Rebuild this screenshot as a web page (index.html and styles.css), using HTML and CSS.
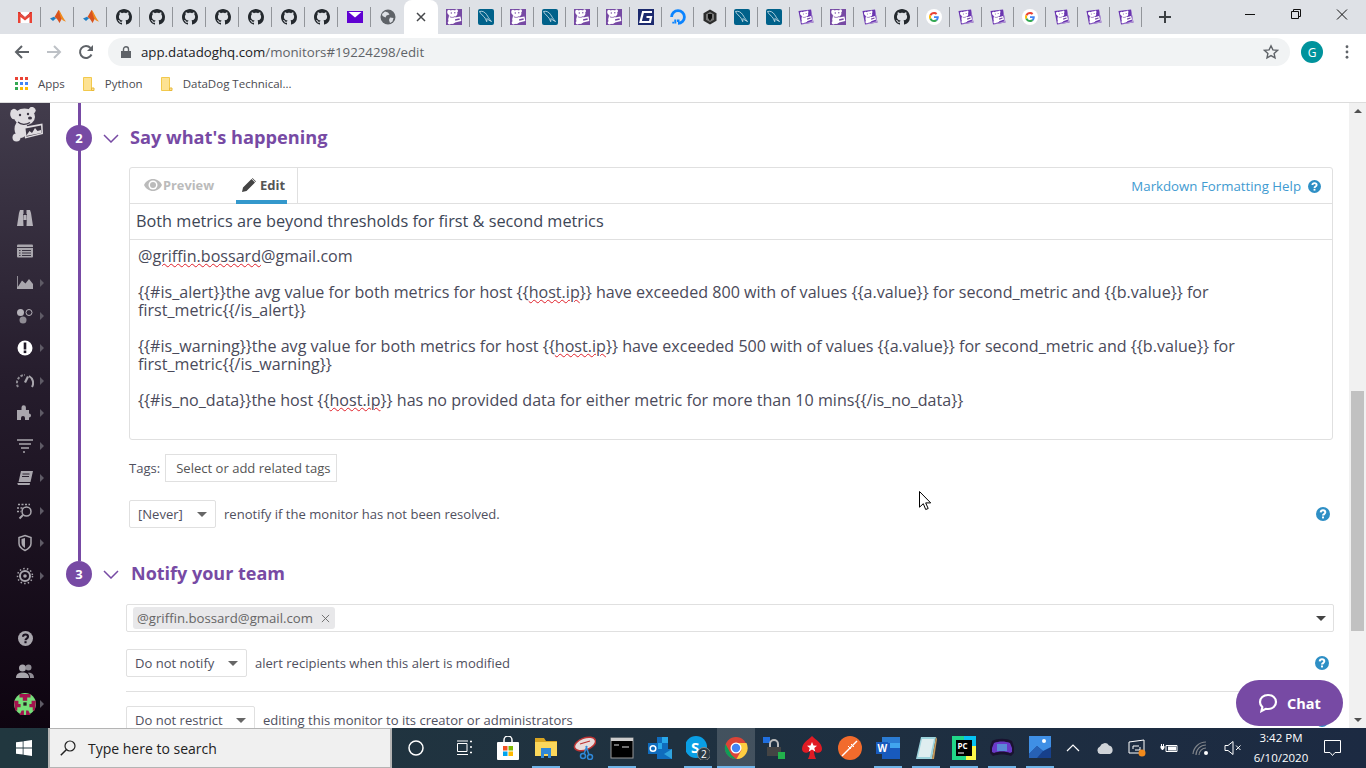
FILE: index.html
```html
<!DOCTYPE html>
<html lang="en">
<head>
<meta charset="utf-8">
<title>Edit monitor</title>
<link rel="stylesheet" href="styles.css">
</head>
<body>
<svg class="defs" aria-hidden="true">
  <symbol id="gh" viewBox="0 0 16 16"><path fill="#24292e" d="M8 0C3.58 0 0 3.58 0 8c0 3.54 2.29 6.53 5.47 7.59.4.07.55-.17.55-.38 0-.19-.01-.82-.01-1.49-2.01.37-2.53-.49-2.69-.94-.09-.23-.48-.94-.82-1.13-.28-.15-.68-.52-.01-.53.63-.01 1.08.58 1.23.82.72 1.21 1.87.87 2.33.66.07-.52.28-.87.51-1.07-1.78-.2-3.64-.89-3.64-3.95 0-.87.31-1.59.82-2.15-.08-.2-.36-1.02.08-2.12 0 0 .67-.21 2.2.82.64-.18 1.32-.27 2-.27.68 0 1.36.09 2 .27 1.53-1.04 2.2-.82 2.2-.82.44 1.1.16 1.92.08 2.12.51.56.82 1.27.82 2.15 0 3.07-1.87 3.75-3.65 3.95.29.25.54.73.54 1.48 0 1.07-.01 1.93-.01 2.2 0 .21.15.46.55.38A8.013 8.013 0 0016 8c0-4.42-3.58-8-8-8z"/></symbol>
  <symbol id="dogw" viewBox="0 0 16 16"><g fill="#fff"><ellipse cx="3" cy="3" rx="1.800" ry="2.200"/><ellipse cx="10.500" cy="2" rx="1.500" ry="1.700"/><ellipse cx="6.800" cy="4.500" rx="4.600" ry="3.600"/><ellipse cx="6" cy="10.500" rx="3.800" ry="4.500"/><path d="M6 9l8.500-1.500.8 4.500L7 14z"/><circle cx="3.500" cy="13.800" r="1.800"/></g><path fill="#774aa4" d="M9 10.200l4.500-.9.3 1.500-4.500.9z"/><circle cx="5.300" cy="4" r=".7" fill="#774aa4"/><circle cx="8.800" cy="3.800" r=".7" fill="#774aa4"/><path fill="none" stroke="#774aa4" stroke-width=".8" d="M4 7.800c1.500.9 3.600.8 5-.3"/></symbol>
  <symbol id="dd" viewBox="0 0 16 16"><rect width="16" height="16" fill="#774aa4"/><use href="#dogw" width="16" height="16"/></symbol>
  <symbol id="ddt" viewBox="0 0 16 16"><path fill="#6a35b0" d="M.5 2L13 .5l2.500 13L3 15.500z"/><path fill="#b49ad6" d="M13 .5l2.500 13L3 15.500l11-3.300z"/><g transform="rotate(-7 8 8) translate(1.500 1.500) scale(.8)"><use href="#dogw" width="16" height="16"/></g></symbol>
  <symbol id="my" viewBox="0 0 16 16"><rect width="16" height="16" rx="2" fill="#00618a"/><path fill="none" stroke="#d7e6ee" stroke-width=".8" d="M1.500 2.500c3-.8 5.500.6 7.200 3.200 1.200 1.800 2 3.800 4.800 6.800-2-.8-3.400-1.800-4.400-3l-.4 3.200C7.600 10 6.800 8.200 5 6.800 3.600 5.600 2.500 4.500 1.500 2.500z"/></symbol>
  <symbol id="goog" viewBox="0 0 48 48"><path fill="#EA4335" d="M24 9.500c3.540 0 6.710 1.220 9.210 3.600l6.850-6.850C35.900 2.380 30.470 0 24 0 14.620 0 6.510 5.380 2.560 13.220l7.980 6.190C12.430 13.720 17.740 9.500 24 9.500z"/><path fill="#4285F4" d="M46.980 24.550c0-1.570-.15-3.090-.38-4.550H24v9.020h12.940c-.58 2.960-2.260 5.480-4.780 7.180l7.730 6c4.510-4.180 7.090-10.360 7.090-17.650z"/><path fill="#FBBC05" d="M10.530 28.590c-.48-1.450-.76-2.990-.76-4.590s.27-3.140.76-4.590l-7.980-6.190C.92 16.460 0 20.120 0 24c0 3.880.92 7.540 2.560 10.780l7.970-6.190z"/><path fill="#34A853" d="M24 48c6.480 0 11.930-2.130 15.890-5.810l-7.730-6c-2.150 1.450-4.920 2.300-8.160 2.300-6.260 0-11.570-4.220-13.470-9.910l-7.980 6.190C6.510 42.620 14.620 48 24 48z"/></symbol>
  <symbol id="gt" viewBox="0 0 16 16"><circle cx="8" cy="8" r="8" fill="#fff"/><use href="#goog" x="3" y="3" width="10" height="10"/></symbol>
  <symbol id="matlab" viewBox="0 0 16 16"><path fill="#1f7fc4" d="M0 9.500l4-1.700 2 1.500-3 2.700z"/><path fill="#d9531e" d="M4.500 8l4-7c1 0 2 4 4 7.500L9.500 14C8 11 6.500 9 4.500 8z"/><path fill="#f08c1e" d="M8.500 1c2 1 4 8 7.500 11.500-1.800-.5-3-.8-3.500-1.500L11 9z"/></symbol>
  <symbol id="q" viewBox="0 0 14 14"><circle cx="7" cy="7" r="7" fill="currentColor"/><path fill="none" stroke="#fff" stroke-width="2" d="M4.700 5.400C4.800 4 5.800 3.300 7 3.300c1.300 0 2.300.8 2.300 2 0 1.800-2.300 1.700-2.300 3.300"/><rect x="6" y="9.500" width="2" height="1.900" fill="#fff"/></symbol>
  <symbol id="q2" viewBox="0 0 14 14"><circle cx="7" cy="7" r="7" fill="currentColor"/><path fill="none" stroke="#1a1220" stroke-width="2" d="M4.700 5.400C4.800 4 5.800 3.300 7 3.300c1.300 0 2.300.8 2.300 2 0 1.800-2.300 1.700-2.300 3.300"/><rect x="6" y="9.500" width="2" height="1.900" fill="#1a1220"/></symbol>
</svg>

<div class="app">
  <div class="tabstrip">
    <div class="tab"><svg class="fav" viewBox="0 0 16 16"><path fill="#fff" d="M1 3h14v11H1z"/><path fill="#ea4335" d="M1 3h2.500v11H1zM12.500 3H15v11h-2.500zM1 3l7 6 7-6v3L8 11.500 1 6z"/><path fill="#c5221f" d="M1 3h1l6 5 6-5h1L8 9z"/></svg></div>
    <div class="tab"><svg class="fav"><use href="#matlab"/></svg></div>
    <div class="tab"><svg class="fav"><use href="#matlab"/></svg></div>
    <div class="tab"><svg class="fav"><use href="#gh"/></svg></div>
    <div class="tab"><svg class="fav"><use href="#gh"/></svg></div>
    <div class="tab"><svg class="fav"><use href="#gh"/></svg></div>
    <div class="tab"><svg class="fav"><use href="#gh"/></svg></div>
    <div class="tab"><svg class="fav"><use href="#gh"/></svg></div>
    <div class="tab"><svg class="fav"><use href="#gh"/></svg></div>
    <div class="tab"><svg class="fav"><use href="#gh"/></svg></div>
    <div class="tab"><svg class="fav" viewBox="0 0 16 16"><rect y="2" width="16" height="12" fill="#6001d2"/><path fill="#fff" d="M1.500 3h13L8 8.500z"/></svg></div>
    <div class="tab plain"><svg class="fav" viewBox="0 0 16 16"><circle cx="8" cy="8" r="7.500" fill="#5f6368"/><path fill="#dee1e6" d="M5 2.500l3 1 1.500 2-3 1-1 2-3-1.500L2 5zM10 8.500l3.500.5-1 3.500-2.500 1.500-1-3z"/></svg></div>
    <div class="tab-active"><svg class="tabx" viewBox="0 0 10 10"><path stroke="#45474a" stroke-width="1.500" d="M1 1l8 8M9 1l-8 8"/></svg></div>
    <div class="tab nar first"><svg class="fav"><use href="#dd"/></svg></div>
    <div class="tab nar"><svg class="fav"><use href="#my"/></svg></div>
    <div class="tab nar"><svg class="fav"><use href="#dd"/></svg></div>
    <div class="tab nar"><svg class="fav"><use href="#my"/></svg></div>
    <div class="tab nar"><svg class="fav"><use href="#dd"/></svg></div>
    <div class="tab nar"><svg class="fav"><use href="#dd"/></svg></div>
    <div class="tab nar"><svg class="fav" viewBox="0 0 16 16"><rect width="16" height="16" fill="#1c2a6e"/><path fill="none" stroke="#fff" stroke-width="2.200" d="M14 3H5L2.500 13H12l1-5H8.500"/></svg></div>
    <div class="tab nar"><svg class="fav" viewBox="0 0 16 16"><path fill="none" stroke="#0b84ff" stroke-width="2.800" d="M8 14.400A6.400 6.400 0 1 0 1.600 8"/><path fill="#0b84ff" d="M7 10.500h2.500V13H7zM4.300 10.500h2v2h-2zM2.300 12.800H4v1.700H2.300zM4.300 12.500h2v2h-2z"/></svg></div>
    <div class="tab nar"><svg class="fav" viewBox="0 0 16 16"><path fill="#2d2d2d" d="M8 .5l6.500 3.700v7.600L8 15.500l-6.500-3.700V4.200z"/><path fill="#777" d="M8 3l4 2.300v5.400L8 13l-4-2.300V5.300z"/><path fill="#111" d="M6 5h4v4l-2 3-2-3z"/></svg></div>
    <div class="tab nar"><svg class="fav"><use href="#my"/></svg></div>
    <div class="tab nar"><svg class="fav"><use href="#my"/></svg></div>
    <div class="tab nar"><svg class="fav"><use href="#ddt"/></svg></div>
    <div class="tab nar"><svg class="fav"><use href="#dd"/></svg></div>
    <div class="tab nar"><svg class="fav"><use href="#ddt"/></svg></div>
    <div class="tab nar"><svg class="fav"><use href="#gh"/></svg></div>
    <div class="tab nar"><svg class="fav"><use href="#gt"/></svg></div>
    <div class="tab nar"><svg class="fav"><use href="#ddt"/></svg></div>
    <div class="tab nar"><svg class="fav"><use href="#ddt"/></svg></div>
    <div class="tab nar"><svg class="fav"><use href="#gt"/></svg></div>
    <div class="tab nar"><svg class="fav"><use href="#ddt"/></svg></div>
    <div class="tab nar"><svg class="fav"><use href="#ddt"/></svg></div>
    <div class="tab nar"><svg class="fav"><use href="#ddt"/></svg></div>
    <svg class="newtab" viewBox="0 0 12 12"><path stroke="#3c4043" stroke-width="2" d="M6 0v12M0 6h12"/></svg>
    <div class="winctl">
      <svg viewBox="0 0 46 28" class="wc"><path stroke="#111" d="M18 14.500h10"/></svg>
      <svg viewBox="0 0 46 28" class="wc"><path fill="none" stroke="#111" d="M18.500 11.500h7v7h-7zM20.500 11.500v-2h7v7h-2"/></svg>
      <svg viewBox="0 0 46 28" class="wc"><path stroke="#111" d="M18 9.500l10 10M28 9.500l-10 10"/></svg>
    </div>
  </div>

  <div class="toolbar">
    <svg class="tbi" viewBox="0 0 16 16"><path fill="none" stroke="#5f6368" stroke-width="2" d="M15 8H2M8 2L2 8l6 6"/></svg>
    <svg class="tbi" viewBox="0 0 16 16"><path fill="none" stroke="#bdc1c6" stroke-width="2" d="M1 8h13M8 2l6 6-6 6"/></svg>
    <svg class="tbi" viewBox="0 0 16 16"><path fill="none" stroke="#5f6368" stroke-width="2" d="M13.500 10.500A6 6 0 1 1 12.500 4"/><path fill="#5f6368" d="M15 1v6H9z"/></svg>
    <div class="omni">
      <svg class="lock" viewBox="0 0 10 12"><path fill="#5f6368" d="M0 5h10v7H0z"/><path fill="none" stroke="#5f6368" stroke-width="1.400" d="M2.500 5V3.200a2.500 2.500 0 0 1 5 0V5"/></svg>
      <span class="url"><span class="host">app.datadoghq.com</span>/monitors#19224298/edit</span>
      <svg class="star" viewBox="0 0 16 16"><path fill="none" stroke="#5f6368" stroke-width="1.400" d="M8 1.800l1.900 4.100 4.500.5-3.300 3 .9 4.400L8 11.600l-4 2.200.9-4.400-3.300-3 4.500-.5z"/></svg>
    </div>
    <div class="avatar">G</div>
    <svg class="dots" viewBox="0 0 4 16"><g fill="#5f6368"><circle cx="2" cy="2" r="1.600"/><circle cx="2" cy="8" r="1.600"/><circle cx="2" cy="14" r="1.600"/></g></svg>
  </div>

  <div class="bookmarks">
    <svg class="appsgrid" viewBox="0 0 13 13"><path fill="#ea4335" d="M0 0h3v3H0zM5 0h3v3H5zM10 0h3v3h-3z"/><path fill="#4285f4" d="M5 5h3v3H5zM10 5h3v3h-3z"/><path fill="#34a853" d="M0 5h3v3H0zM0 10h3v3H0z"/><path fill="#fbbc05" d="M5 10h3v3H5zM10 10h3v3h-3z"/></svg>
    <span class="bm bm-apps">Apps</span>
    <svg class="folder" viewBox="0 0 12 14"><path fill="#fde293" stroke="#f2c94c" d="M.5.500h8v11l2 0v2H.5z"/><path fill="#fde293" stroke="#e8b93a" d="M8.500 11h2.500v2.500H8.500z"/></svg>
    <span class="bm bm-py">Python</span>
    <svg class="folder" viewBox="0 0 12 14"><path fill="#fde293" stroke="#f2c94c" d="M.5.500h8v11l2 0v2H.5z"/><path fill="#fde293" stroke="#e8b93a" d="M8.500 11h2.500v2.500H8.500z"/></svg>
    <span class="bm">DataDog Technical...</span>
  </div>

  <div class="main">
    <nav class="sidenav">
      <svg class="logo" viewBox="0 0 33 36"><g fill="#dfdce0"><ellipse cx="4" cy="7" rx="3.800" ry="5.200"/><ellipse cx="22" cy="3.500" rx="3.500" ry="3.500" transform="rotate(30 22 3.500)"/><ellipse cx="14.500" cy="10" rx="10.500" ry="8.500"/><ellipse cx="11" cy="22" rx="6.500" ry="9"/><circle cx="6.500" cy="30.500" r="4"/><path d="M13 20l19.500-3.500L33 27l-18 4.500z"/></g><path fill="#3b3543" d="M15.500 21.500l15.500-3 .5 7.500-15 3.800z"/><path fill="#dfdce0" d="M16 29l3.500-5 2.500 2 3-5 2.500 3 3.500-1 .3 3z"/><path fill="none" stroke="#3b3543" stroke-width="1.200" d="M8 15c3 3 8 3 12 .5"/><circle cx="10" cy="8" r="1.200" fill="#3b3543"/><circle cx="18" cy="7" r="1.200" fill="#3b3543"/><ellipse cx="20" cy="11" rx="2" ry="1.500" fill="#3b3543"/></svg>
      <div class="navlist">
        <div class="ni n-first"><svg class="nic" viewBox="0 0 18 18"><path fill="#b5b2b9" d="M3 4l1-3h3.500v4H7l.5 12H1zM15 4l-1-3h-3.500v4h.5l-.5 12h6.500zM7.500 6h3v5h-3z"/></svg></div>
        <div class="ni"><svg class="nic" viewBox="0 0 18 18"><rect x="1" y="2.500" width="16" height="13" rx="1" fill="#a9a6ad"/><path stroke="#3a3442" d="M1 5.500h16M3 8.500h1.500M6 8.500h9M3 11h1.500M6 11h9M3 13.500h1.500M6 13.500h9"/></svg></div>
        <div class="ni arrow"><svg class="nic" viewBox="0 0 18 18"><path fill="#a9a6ad" d="M1 15V2h.8v11L6 6.500l3.500 3L13 5l4 5v5z"/></svg></div>
        <div class="ni arrow"><svg class="nic" viewBox="0 0 18 18"><circle cx="4.500" cy="5.500" r="3.500" fill="#b5b2b9"/><circle cx="13" cy="5.500" r="3" fill="none" stroke="#b5b2b9"/><circle cx="7" cy="13" r="3.500" fill="#8f8c94"/></svg></div>
        <div class="ni arrow"><svg class="nic" viewBox="0 0 18 18"><circle cx="9" cy="9" r="7.500" fill="#fff"/><rect x="7.700" y="3.500" width="2.600" height="7" fill="#1f1826"/><rect x="7.700" y="11.500" width="2.600" height="2.600" fill="#1f1826"/></svg></div>
        <div class="ni arrow"><svg class="nic" viewBox="0 0 18 18"><path fill="none" stroke="#8f8c94" stroke-width="2" stroke-dasharray="2.500 1.500" d="M2 15A8 8 0 0 1 9 3"/><path fill="none" stroke="#a9a6ad" stroke-width="2" d="M13 4a8 8 0 0 1 3 11"/><path fill="#a9a6ad" d="M11 4l2 1-3 6-2-1z"/></svg></div>
        <div class="ni arrow"><svg class="nic" viewBox="0 0 18 18"><path fill="#a9a6ad" d="M1 6h4.500V3.500a2.200 2.200 0 0 1 4.400 0V6H13v3.500a2 2 0 0 1 0 4V16H9v-2a2 2 0 0 0-4 0v2H1z"/></svg></div>
        <div class="ni arrow"><svg class="nic" viewBox="0 0 18 18"><path stroke="#a9a6ad" stroke-width="1.600" d="M1 3h16M3 7h12M5 11h8"/><path stroke="#a9a6ad" stroke-width="1.600" stroke-dasharray="2 2" d="M7 15h4"/></svg></div>
        <div class="ni arrow"><svg class="nic" viewBox="0 0 18 18"><path fill="#a9a6ad" d="M5 2h12l-2.500 11H2.500z"/><path fill="#a9a6ad" d="M1.500 14H14l-.3 2H3a1.500 1.500 0 0 1-1.500-2z"/><path stroke="#2a2230" d="M6.500 5h7M6 7.500h7"/></svg></div>
        <div class="ni arrow"><svg class="nic" viewBox="0 0 18 18"><path stroke="#a9a6ad" stroke-width="1.500" stroke-dasharray="2 1.500" d="M2 2.500h12M1 6h6M1 9.500h4"/><circle cx="10.500" cy="9.500" r="4.500" fill="none" stroke="#a9a6ad" stroke-width="1.500"/><path stroke="#a9a6ad" stroke-width="2" d="M7 13l-3.500 3.500"/></svg></div>
        <div class="ni arrow"><svg class="nic" viewBox="0 0 18 18"><path fill="none" stroke="#a9a6ad" stroke-width="1.500" d="M9 1.500l6 2v6c0 3-3 5.500-6 7-3-1.500-6-4-6-7v-6z"/><path fill="#a9a6ad" d="M9 4v10c-2-1-3.500-3-3.500-5V5z"/></svg></div>
        <div class="ni arrow"><svg class="nic" viewBox="0 0 18 18"><circle cx="9" cy="9" r="5" fill="none" stroke="#a9a6ad" stroke-width="2"/><circle cx="9" cy="9" r="1.800" fill="#a9a6ad"/><circle cx="9" cy="9" r="7.500" fill="none" stroke="#a9a6ad" stroke-dasharray="1.500 2.200" stroke-width="1.500"/></svg></div>
      </div>
      <div class="navbottom">
        <div class="ni"><svg class="nic q-side"><use href="#q2"/></svg></div>
        <div class="ni"><svg class="nic" viewBox="0 0 18 18"><circle cx="6.500" cy="6" r="3.500" fill="#a9a6ad"/><path fill="#a9a6ad" d="M0 16c0-4 2.500-5.500 6.500-5.500S13 12 13 16z"/><circle cx="12.500" cy="5.500" r="3" fill="#8f8c94"/><path fill="#8f8c94" d="M14 16c0-2.500-.8-4-2.200-5.200 3.500-.4 6.200 1 6.200 5.200z"/></svg></div>
        <div class="ni arrow av-row"><svg class="nav-av" viewBox="0 0 20 20"><circle cx="10" cy="10" r="10" fill="#76e07a"/><path fill="#a3124f" d="M5 1h10v3h-3v3H8V4H5zM0 7h4v3h2v3H3v3H1zM20 7h-4v3h-2v3h3v3h2zM7 16h2v4H5zM11 16h2l2 4h-4z"/><rect x="8.500" y="8.500" width="3" height="3" fill="#222"/></svg></div>
      </div>
    </nav>

    <div class="content">
      <section class="step step-line">
        <div class="head">
          <div class="num">2</div>
          <svg class="chev" viewBox="0 0 16 9"><path fill="none" stroke="#774aa4" stroke-width="1.500" d="M1 1l7 7 7-7"/></svg>
          <h2 class="title">Say what's happening</h2>
        </div>
        <div class="editor">
          <div class="edtabs">
            <div class="edtab preview"><svg class="eye" viewBox="0 0 18 12"><path fill="#bbb" d="M9 0c4 0 7.300 2.500 9 6-1.700 3.500-5 6-9 6S1.700 9.500 0 6c1.700-3.500 5-6 9-6z"/><circle cx="9" cy="6" r="4.500" fill="#fff"/><circle cx="9" cy="6" r="3" fill="#bbb"/></svg>Preview</div>
            <div class="edtab edit"><svg class="pencil" viewBox="0 0 14 14"><path fill="#444" d="M0 14l1-4.500L9.500 1l3.500 3.500L4.500 13zM10.500 0L14 3.500 13.500 4 10 .5z"/></svg>Edit</div>
            <div class="mdhelp">Markdown Formatting Help<svg class="help-ic"><use href="#q"/></svg></div>
          </div>
          <div class="subject">Both metrics are beyond thresholds for first &amp; second metrics</div>
          <div class="msg">@<span class="sp">griffin.bossard</span>@gmail.com<br><br>{{#is_alert}}the avg value for both metrics for host {{<span class="sp">host.ip</span>}} have exceeded 800 with of values {{a.value}} for second_metric and {{b.value}} for<br>first_metric{{/is_alert}}<br><br>{{#is_warning}}the avg value for both metrics for host {{<span class="sp">host.ip</span>}} have exceeded 500 with of values {{a.value}} for second_metric and {{b.value}} for<br>first_metric{{/is_warning}}<br><br>{{#is_no_data}}the host {{<span class="sp">host.ip</span>}} has no provided data for either metric for more than 10 mins{{/is_no_data}}</div>
        </div>
        <div class="row tagsrow"><span class="lbl">Tags:</span><div class="tagbox">Select or add related tags</div></div>
        <div class="row neverrow">
          <div class="sel sel-never">[Never]<i class="caret"></i></div>
          <span class="lbl">renotify if the monitor has not been resolved.</span>
          <svg class="help-ic end"><use href="#q"/></svg>
        </div>
      </section>

      <section class="step step-three">
        <div class="head head3">
          <div class="num">3</div>
          <svg class="chev" viewBox="0 0 16 9"><path fill="none" stroke="#774aa4" stroke-width="1.500" d="M1 1l7 7 7-7"/></svg>
          <h2 class="title">Notify your team</h2>
        </div>
        <div class="tokens">
          <div class="chip">@griffin.bossard@gmail.com<svg class="chipx" viewBox="0 0 10 10"><path stroke="#666" d="M1 1l8 8M9 1l-8 8"/></svg></div>
          <i class="caret caret-dark"></i>
        </div>
        <div class="row notifyrow">
          <div class="sel sel-notify">Do not notify<i class="caret"></i></div>
          <span class="lbl">alert recipients when this alert is modified</span>
          <svg class="help-ic end end3"><use href="#q"/></svg>
        </div>
        <div class="rule"></div>
        <div class="row">
          <div class="sel sel-restrict">Do not restrict<i class="caret"></i></div>
          <span class="lbl">editing this monitor to its creator or administrators</span>
          <svg class="help-ic end end3"><use href="#q"/></svg>
        </div>
      </section>

      <div class="chat"><svg class="chat-ic" viewBox="0 0 20 20"><path fill="none" stroke="#fff" stroke-width="2.200" d="M10 2c4.700 0 8 3 8 7s-3.300 7-8 7c-.8 0-1.500-.1-2.200-.2L3.500 18l.8-3.800C2.900 13 2 11.200 2 9c0-4 3.300-7 8-7z"/></svg>Chat</div>
      <svg class="cursor" viewBox="0 0 13 20"><path fill="#fff" stroke="#000" d="M.5.500v15.700l3.800-3.500 2.400 5.800 2.500-1-2.500-5.600h5z"/></svg>
    </div>

    <div class="scrollbar">
      <i class="sb-up"></i>
      <div class="sb-track"><div class="sb-thumb"></div></div>
      <i class="sb-down"></i>
    </div>
  </div>

  <div class="taskbar">
    <div class="start"><svg class="winlogo" viewBox="0 0 16 16"><path fill="#fff" d="M0 2.300l6.700-.9v6.200H0zM7.500 1.300L16 0v7.600H7.500zM0 8.400h6.700v6.200L0 13.700zM7.500 8.400H16V16l-8.500-1.200z"/></svg></div>
    <div class="search"><svg class="mag" viewBox="0 0 16 16"><circle cx="10" cy="6" r="5" fill="none" stroke="#222" stroke-width="1.200"/><path stroke="#222" stroke-width="1.500" d="M6.500 9.500L.8 15.200"/></svg>Type here to search</div>
    <div class="tk-sys"><svg class="tkic" viewBox="0 0 16 16"><circle cx="8" cy="8" r="7" fill="none" stroke="#fff" stroke-width="1.500"/></svg></div>
    <div class="tk-sys tk-view"><svg class="tkic" viewBox="0 0 16 16"><path fill="none" stroke="#fff" d="M1.500 3.500h9.500v8H1.500zM1 1h11M1 14.500h11"/><path stroke="#fff" stroke-width="1.500" d="M14 1.500h2M14 7h2M14 12.500h2"/></svg></div>
    <div class="apps">
      <div class="ti"><svg class="tkapp" viewBox="0 0 24 24"><path fill="none" stroke="#fff" stroke-width="1.500" d="M8 7V4a4 4 0 0 1 8 0v3"/><rect x="1" y="6" width="22" height="18" rx="1" fill="#fff"/><path fill="#f25022" d="M7 10h4.500v4.500H7z"/><path fill="#7fba00" d="M12.500 10H17v4.500h-4.500z"/><path fill="#00a4ef" d="M7 15.500h4.500V20H7z"/><path fill="#ffb900" d="M12.500 15.500H17V20h-4.500z"/></svg></div>
      <div class="ti on"><svg class="tkapp" viewBox="0 0 24 24"><path fill="#d9a521" d="M1 2h9l2 3h11v15H1z"/><path fill="#fbd75b" d="M1 6h22v14H1z"/><path fill="#2f88d8" d="M7 12h10v10h-3v-4h-4v4H7z"/></svg></div>
      <div class="ti"><svg class="tkapp" viewBox="0 0 24 24"><ellipse cx="13" cy="8" rx="11" ry="6" fill="#e8dcdc" stroke="#b33" stroke-width="1.500" transform="rotate(-20 13 8)"/><path stroke="#b33" stroke-width="1.200" d="M8 8l10-3"/><circle cx="11" cy="20" r="2.500" fill="none" stroke="#2f88d8" stroke-width="1.500"/><circle cx="18" cy="21" r="2.500" fill="none" stroke="#2f88d8" stroke-width="1.500"/><path stroke="#2f88d8" stroke-width="1.500" d="M12 18l3-8M17 19l-3-9"/></svg></div>
      <div class="ti on"><svg class="tkapp" viewBox="0 0 24 24"><rect x="1" y="2" width="22" height="20" fill="#000" stroke="#999"/><rect x="1" y="2" width="22" height="3" fill="#ccc"/><path stroke="#ddd" d="M4 9h5M12 11h7"/></svg></div>
      <div class="ti"><svg class="tkapp" viewBox="0 0 24 24"><path fill="#0f6cbd" d="M9 1h11v20H9z"/><path fill="#28a8ea" d="M14 1h6v6h-6zM9 7h5v7H9z"/><path fill="#0f6cbd" d="M9 13h15v10H9z"/><path fill="#50d9ff" d="M24 13v10l-8-5z" opacity=".5"/><rect y="7" width="10" height="11" fill="#0f6cbd"/><circle cx="5" cy="12.500" r="2.800" fill="none" stroke="#fff" stroke-width="1.500"/></svg></div>
      <div class="ti on"><svg class="tkapp" viewBox="0 0 24 24"><circle cx="10" cy="11" r="11" fill="#0a9fe5"/><text x="5" y="17" class="sk">S</text><circle cx="18" cy="18" r="6.500" fill="#2b3a44" stroke="#888"/><text x="15" y="22" class="sk2">2</text></svg></div>
      <div class="ti on active"><svg class="tkapp" viewBox="0 0 24 24"><circle cx="12" cy="12" r="11" fill="#db4437"/><path fill="#0f9d58" d="M1.500 8l6 11 4.500 4A11 11 0 0 1 1.500 8z"/><path fill="#ffcd40" d="M12 7h10.500a11 11 0 0 1-10 16l5-9z"/><circle cx="12" cy="12" r="5.500" fill="#fff"/><circle cx="12" cy="12" r="4.200" fill="#4285f4"/></svg></div>
      <div class="ti"><svg class="tkapp" viewBox="0 0 24 24"><path fill="#1f6fe0" d="M1 1h7v6H1z"/><path fill="none" stroke="#bbb" stroke-width="2" d="M8 11V8a4 4 0 0 1 8 0v3"/><rect x="5" y="11" width="14" height="9" fill="#444"/><path fill="#22b14c" d="M16 16h7v7h-7z"/></svg></div>
      <div class="ti"><svg class="tkapp" viewBox="0 0 24 24"><path fill="#e01b24" d="M12 0c4 4 10 7 10 13 0 4-5 5-8 2 0 3 1 6 2 8H8c1-2 2-5 2-8-3 3-8 2-8-2C2 7 8 4 12 0z"/><path fill="#fff" d="M12 6l1.500 3.500 3.500.3-2.700 2.200.9 3.500-3.200-1.900-3.200 1.900.9-3.500L7 9.800l3.500-.3z"/></svg></div>
      <div class="ti"><svg class="tkapp" viewBox="0 0 24 24"><circle cx="12" cy="12" r="12" fill="#f26b2c"/><path stroke="#fff" stroke-width="1.500" d="M4 20L18 6l1-1"/><path stroke="#fff" d="M10 10l3 3M13 8l3 3"/></svg></div>
      <div class="ti on"><svg class="tkapp" viewBox="0 0 24 24"><path fill="#185abd" d="M6 1h18v22H6z"/><path fill="#2b7cd3" d="M6 1h18v6H6z"/><path fill="#41a5ee" d="M14 7h10v5H14z"/><rect y="6" width="12" height="12" fill="#185abd"/><text x="1.500" y="15.500" class="wd">W</text></svg></div>
      <div class="ti on"><svg class="tkapp" viewBox="0 0 24 24"><path fill="#9cd3dc" d="M7 1h15l-4 22H2z"/><path fill="#dfeef0" d="M8 3h12L16 21H4z"/><path fill="#c79a5a" d="M22 1l-4 22h2l3-20z"/></svg></div>
      <div class="ti on"><svg class="tkapp" viewBox="0 0 24 24"><path fill="#21d789" d="M0 0h14v24H0z"/><path fill="#fcf84a" d="M14 8h10v16H14z"/><path fill="#07c3f2" d="M12 0h12v10H12z"/><rect x="4" y="4" width="16" height="16" fill="#000"/><text x="5.500" y="12.500" class="pc">PC</text><path stroke="#fff" d="M6 17h6"/></svg></div>
      <div class="ti on"><svg class="tkapp" viewBox="0 0 24 24"><path fill="#1a1230" d="M2 5c5-3 15-3 20 0l2 6v6l-3 3c-5-2-13-2-18 0l-3-3v-6z"/><path fill="#6a3ac8" d="M4 7c5-2 11-2 16 0l2 5v4l-2 1c-5-2-11-2-16 0l-2-1v-4z"/><rect x="7" y="8" width="10" height="7" fill="#5a8ad8"/></svg></div>
      <div class="ti on"><svg class="tkapp" viewBox="0 0 24 24"><rect x="1" width="22" height="22" fill="#3f8fe5"/><path fill="#17408b" d="M1 18l8-8 6 5 8-4v11H1z"/><path fill="#2761b5" d="M9 10l6 5-6 7H1v-4z"/><circle cx="16" cy="5" r="2" fill="#fff"/></svg></div>
    </div>
    <div class="tray">
      <div class="tr"><svg class="tric" viewBox="0 0 14 10"><path fill="none" stroke="#fff" stroke-width="1.200" d="M1 8l6-6 6 6"/></svg></div>
      <div class="tr"><svg class="tric tric-wide" viewBox="0 0 18 12"><path fill="#cfd3d8" d="M4 12a4 4 0 0 1 0-7.500 5 5 0 0 1 9-1 4.500 4.500 0 0 1 1 8.500z"/></svg></div>
      <div class="tr"><svg class="tric tric-big" viewBox="0 0 18 18"><path fill="none" stroke="#fff" d="M1 3l15-2v13H1z"/><path fill="none" stroke="#fff" d="M5 10V7h6M12 8v3H7"/><circle cx="14" cy="14" r="3.500" fill="#f28a1c"/></svg></div>
      <div class="tr"><svg class="tric tric-wide" viewBox="0 0 18 12"><path fill="none" stroke="#fff" d="M6 3.500h11v6H6z"/><path fill="#fff" d="M8 4.500h8v4H8zM1 2h1v2H1zM3 2h1v2H3zM.5 4h4v2L3 8H2L.5 6z"/></svg></div>
      <div class="tr"><svg class="tric tric-big" viewBox="0 0 18 18"><path fill="none" stroke="#80858b" stroke-width="1.200" d="M1 15a13 13 0 0 1 13-12M4 16a10 10 0 0 1 10-10M7 16a7 7 0 0 1 7-7"/><circle cx="14" cy="14" r="2" fill="#fff"/></svg></div>
      <div class="tr"><svg class="tric tric-big" viewBox="0 0 18 18"><path fill="none" stroke="#fff" d="M1 6.500h3l5-4v13l-5-4H1z"/><path stroke="#fff" d="M12 6.500l4.500 4.500M16.500 6.500L12 11"/></svg></div>
    </div>
    <div class="clock"><span>3:42 PM</span><span>6/10/2020</span></div>
    <div class="notif"><svg class="notif-ic" viewBox="0 0 17 16"><path fill="none" stroke="#fff" d="M.5.500h16v12H11l-2.500 3-2.500-3H.5z"/></svg></div>
  </div>
</div>
</body>
</html>
```

FILE: styles.css
```css
* { box-sizing: border-box; }
html, body { margin: 0; height: 100%; overflow: hidden; background: #fff; }
body { font-family: "Open Sans", "Noto Sans", sans-serif; color: #4a4a5a; }
.defs { position: absolute; width: 0; height: 0; }
.app { display: flex; flex-direction: column; width: 1366px; height: 768px; overflow: hidden; }

/* tab strip */
.tabstrip { display: flex; align-items: center; height: 34px; background: #dee1e6; padding-left: 8px; flex: none; }
.tab { width: 33px; height: 20px; display: flex; align-items: center; justify-content: center; border-right: 1px solid #92959a; flex: none; padding-left: 1px; }
.tab.plain { border-right: 0; }
.tab.nar { width: 32px; }
.fav { width: 16px; height: 16px; display: block; }
.tab-active { width: 34px; height: 34px; background: #fff; border-radius: 8px 8px 0 0; display: flex; align-items: center; justify-content: center; flex: none; }
.tabx { width: 10px; height: 10px; }
.newtab { width: 12px; height: 12px; margin-left: 17px; flex: none; }
.winctl { margin-left: auto; display: flex; align-self: flex-start; margin-right: 1px; }
.wc { width: 46px; height: 28px; display: block; }

/* toolbar */
.toolbar { height: 34px; display: flex; align-items: center; background: #fff; flex: none; padding: 2px 0 0 14px; }
.tbi { width: 16px; height: 16px; margin-right: 16px; flex: none; }
.omni { width: 1182px; height: 28px; border-radius: 14px; background: #f1f3f4; display: flex; align-items: center; padding: 0 10px 0 13px; margin-left: -2px; }
.lock { width: 10px; height: 12px; flex: none; }
.url { font-size: 13.27px; color: #5f6368; margin-left: 10px; white-space: nowrap; }
.host { color: #202124; }
.star { width: 16px; height: 16px; margin-left: auto; margin-right: 1px; }
.avatar { width: 22px; height: 22px; border-radius: 50%; background: #00939c; color: #fff; font-size: 12px; display: flex; align-items: center; justify-content: center; margin-left: 11px; flex: none; }
.dots { width: 4px; height: 14px; margin-left: 22px; flex: none; }

/* bookmarks */
.bookmarks { height: 35px; display: flex; align-items: center; background: #fff; border-bottom: 1px solid #dcdcdc; padding: 0 0 3px 15px; flex: none; }
.appsgrid { width: 13px; height: 13px; margin-right: 10px; }
.bm { font-size: 11.5px; color: #4a4a50; white-space: nowrap; }
.bm-apps { margin-right: 18px; }
.bm-py { margin-right: 18px; }
.folder { width: 12px; height: 14px; margin-right: 10px; }

/* main */
.main { display: flex; flex: 1; min-height: 0; }
.sidenav { width: 50px; flex: none; background: linear-gradient(#423c4c, #251c2c 45%, #0e0410); display: flex; flex-direction: column; align-items: stretch; padding-top: 4px; }
.logo { width: 33px; height: 36px; margin-left: 10px; flex: none; }
.navlist { margin-top: 59px; }
.navbottom { margin-top: 30px; }
.ni { height: 32.5px; display: flex; align-items: center; padding-left: 16px; position: relative; }
.arrow::after { content: ""; position: absolute; left: 40px; top: 50%; margin-top: -4px; border-left: 4px solid #5f5b66; border-top: 4px solid transparent; border-bottom: 4px solid transparent; }
.nic { width: 18px; height: 18px; display: block; }
.q-side { width: 15px; height: 15px; color: #a9a6ad; margin-left: 2px; }
.nav-av { width: 22px; height: 22px; margin-left: -2px; }
.av-row { margin-top: 1px; }

/* content */
.content { width: 1299px; flex: none; position: relative; overflow: hidden; background: #fff; }
.step { margin-left: 28px; padding-left: 48px; }
.step-line { border-left: 3px solid #774aa4; padding-top: 22px; height: 458px; }
.head { display: flex; align-items: center; margin-left: -63px; height: 26px; }
.head3 { margin-left: -60px; }
.num { width: 26px; height: 26px; border-radius: 50%; background: #774aa4; color: #fff; font-weight: 700; font-size: 13px; display: flex; align-items: center; justify-content: center; flex: none; }
.chev { width: 16px; height: 9px; margin: 0 11px; flex: none; }
.title { margin: 0 0 2px; font-size: 18.2px; font-weight: 700; color: #774aa4; white-space: nowrap; }
.head3 .title { margin-left: 1px; font-size: 18px; }

.editor { width: 1204px; height: 273px; margin-top: 16px; border: 1px solid #e0e0e0; border-radius: 3px; }
.edtabs { height: 36px; display: flex; border-bottom: 1px solid #e0e0e0; align-items: stretch; }
.edtab { display: flex; align-items: center; font-size: 13px; font-weight: 700; white-space: nowrap; padding-bottom: 2px; }
.preview { color: #bbb; padding-left: 14px; width: 106px; font-size: 12.8px; }
.eye { width: 18px; height: 12px; margin-right: 1px; }
.edit { color: #555; border-right: 1px solid #e0e0e0; width: 62px; position: relative; padding-left: 6px; }
.edit::after { content: ""; position: absolute; left: 0; right: 10px; bottom: -1px; height: 4px; background: #3498cc; }
.pencil { width: 14px; height: 14px; margin-right: 4px; }
.mdhelp { margin-left: auto; display: flex; align-items: center; color: #3f9bd1; font-size: 13.25px; padding-right: 11px; padding-top: 1px; }
.help-ic { width: 13px; height: 13px; color: #2e8fc5; margin-left: 7px; flex: none; }
.subject { height: 36px; border-bottom: 1px solid #e0e0e0; font-size: 16.3px; display: flex; align-items: center; padding-left: 6px; color: #3d4656; white-space: nowrap; padding-bottom: 1px; }
.msg { padding: 7px 8px; font-size: 16.1px; line-height: 18px; color: #4a4a5a; white-space: nowrap; }
.sp { text-decoration: underline wavy #e0202a 1px; text-underline-offset: 1px; }

.row { display: flex; align-items: center; height: 28px; width: 1204px; }
.step-three .row { width: 1208px; }
.lbl { font-size: 13.05px; color: #50505e; white-space: nowrap; }
.tagsrow { margin-top: 14px; }
.tagbox { height: 28px; width: 172px; margin-left: 5px; border: 1px solid #e0e0e0; font-size: 13.05px; display: flex; align-items: center; padding-left: 10px; color: #555; white-space: nowrap; }
.neverrow { margin-top: 18px; }
.sel { height: 28px; border: 1px solid #e0e0e0; border-radius: 2px; display: flex; align-items: center; padding-left: 8px; font-size: 13.05px; position: relative; color: #50505e; margin-right: 8px; flex: none; white-space: nowrap; }
.sel-never { width: 87px; }
.sel-notify { width: 121px; }
.sel-restrict { width: 129px; }
.caret { width: 0; height: 0; border-left: 5px solid transparent; border-right: 5px solid transparent; border-top: 5px solid #666; flex: none; margin-left: auto; margin-right: 8px; }
.end { margin-left: auto; margin-right: 3px; width: 14px; height: 14px; }
.end3 { margin-right: 5px; }

.tokens { width: 1208px; height: 28px; margin-top: 17px; border: 1px solid #e0e0e0; border-radius: 2px; display: flex; align-items: center; padding-left: 6px; }
.chip { height: 22px; width: 202px; background: #e8e8ea; border-radius: 3px; display: flex; align-items: center; padding-left: 4px; font-size: 13.2px; color: #666; white-space: nowrap; }
.chipx { width: 9px; height: 9px; margin-left: 8px; }
.caret-dark { border-top-color: #444; margin-right: 7px; }
.notifyrow { margin-top: 17px; }
.rule { width: 1208px; height: 1px; background: #e0e0e0; margin: 14px 0; }

.chat { position: absolute; left: 1186px; top: 577px; width: 107px; height: 46px; border-radius: 23px; background: #774aa4; color: #fff; font-weight: 700; font-size: 14.5px; display: flex; align-items: center; padding-left: 22px; }
.chat-ic { width: 20px; height: 20px; margin-right: 9px; }
.cursor { position: absolute; left: 869px; top: 388px; width: 13px; height: 20px; }

/* scrollbar */
.scrollbar { width: 17px; flex: none; background: #f1f1f1; display: flex; flex-direction: column; align-items: center; }
.sb-up, .sb-down { width: 0; height: 0; flex: none; border-left: 4px solid transparent; border-right: 4px solid transparent; }
.sb-up { border-bottom: 4px solid #505050; margin: 6px 0; }
.sb-down { border-top: 4px solid #505050; margin: 6px 0; }
.sb-track { flex: 1; width: 100%; padding: 272px 0 0 2px; }
.sb-thumb { height: 240px; background: #c1c1c1; width: 13px; }

/* taskbar */
.taskbar { height: 40px; flex: none; display: flex; background: linear-gradient(90deg, #21373f, #1f3140 50%, #1c2a42); color: #fff; }
.start { width: 48px; display: flex; align-items: center; justify-content: center; flex: none; }
.winlogo { width: 16px; height: 16px; }
.search { width: 344px; flex: none; background: #f0f0f0; border: 1px solid #b4b4b4; border-width: 1px 2px; color: #222; font-size: 14px; display: flex; align-items: center; padding-left: 10px; }
.mag { width: 16px; height: 16px; margin-right: 12px; }
.tk-sys { width: 48px; flex: none; display: flex; align-items: center; justify-content: center; }
.tk-view { width: 47px; }
.tkic { width: 16px; height: 16px; }
.apps { display: flex; margin-left: 2px; }
.ti { width: 38px; display: flex; align-items: center; justify-content: center; position: relative; flex: none; }
.tkapp { width: 24px; height: 24px; }
.ti.on::after { content: ""; position: absolute; left: 5px; right: 5px; bottom: 0; height: 2px; background: #6fb4e8; }
.ti.active { background: rgba(255, 255, 255, .16); }
.ti.active::after { left: 0; right: 0; }
.sk { font: 700 15px "Open Sans", sans-serif; fill: #fff; }
.sk2 { font: 400 10px "Open Sans", sans-serif; fill: #fff; }
.wd { font: 700 10px "Open Sans", sans-serif; fill: #fff; }
.pc { font: 700 8px "Open Sans", sans-serif; fill: #fff; }
.tray { display: flex; margin-left: -2px; }
.tr { width: 32px; display: flex; align-items: center; justify-content: center; flex: none; }
.tric { width: 14px; height: 10px; }
.tric-wide { width: 18px; height: 12px; }
.tric-big { width: 18px; height: 18px; }
.clock { width: 64px; flex: none; display: flex; flex-direction: column; align-items: center; justify-content: center; font-size: 11.5px; line-height: 20px; white-space: nowrap; }
.notif { width: 39px; flex: none; display: flex; align-items: center; justify-content: center; }
.notif-ic { width: 17px; height: 16px; }
```
